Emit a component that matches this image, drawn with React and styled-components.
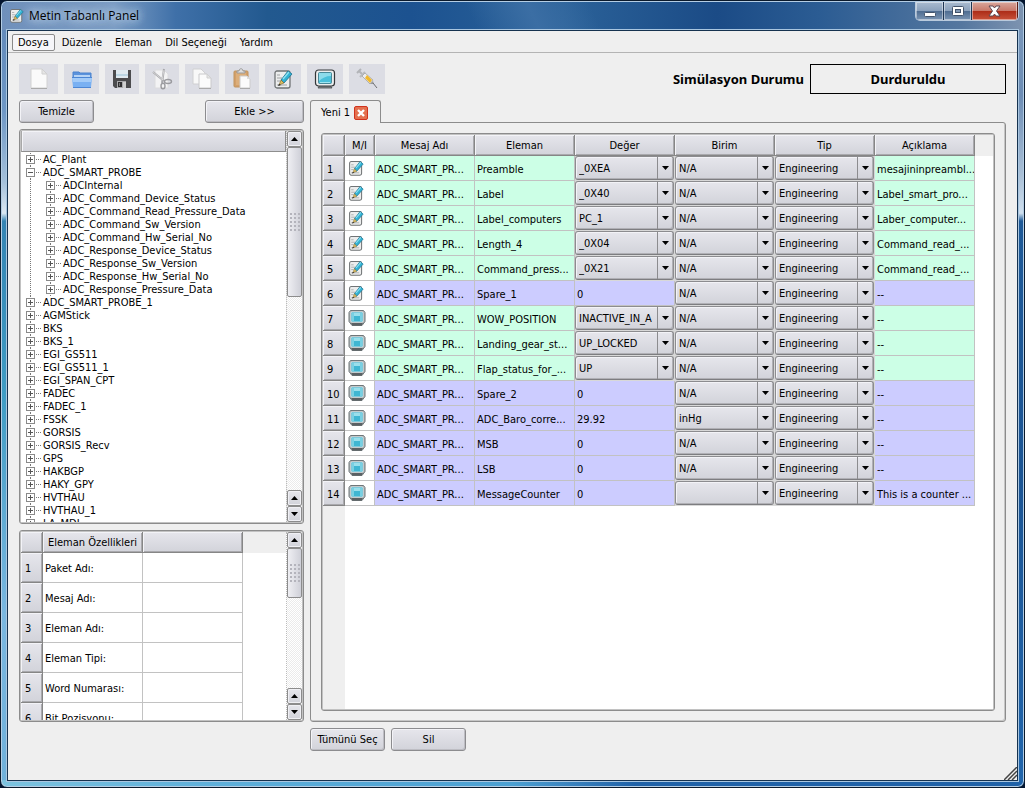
import React from 'react';
import styled, { createGlobalStyle, css } from 'styled-components';

const GlobalStyle = createGlobalStyle`
  * {
    box-sizing: border-box;
  }
  body {
    margin: 0;
    background: #03142f;
    color: #000;
    font-family: 'DejaVu Sans Condensed', 'Noto Sans', sans-serif;
    font-size: 11px;
    line-height: 13px;
  }
  button,
  select {
    font: inherit;
    color: inherit;
  }
`;

const face = css`
  background: linear-gradient(#e6e6ec, #d2d3da);
`;

const Window = styled.div`
  height: 100vh;
  min-height: 600px;
  display: flex;
  flex-direction: column;
  padding: 0 6px 6px;
  border: 1px solid #0b1a2c;
  border-radius: 7px;
  box-shadow: inset 0 0 0 1px #b4cde4;
  background:
    linear-gradient(90deg, transparent 50%, #1f62a8 62%) bottom / 100% 7px no-repeat,
    linear-gradient(90deg, #7cc3df, #5fb0da 20%, #4ba0d2 50%, #5a9fd2 66%, #2c72b8 80%) bottom / 100% 7px no-repeat,
    linear-gradient(#5e86b7, #6e97c5 14%, #a4c0da 23%, #dce8f2 27%, #3484b4 28%, #3f9cc4 50%, #7ab7e0 78%, #6fb0da) left / 8px 100% no-repeat,
    linear-gradient(#7f9bbd, #6d8db5 12%, #a9bfd6 22%, #cfdfee 27%, #1f5a98 28%, #1c5594 60%, #2266ac) right / 8px 100% no-repeat,
    #1d4f8c;
`;

const TitleBar = styled.header`
  flex: none;
  height: 28px;
  display: flex;
  align-items: flex-start;
  justify-content: space-between;
  margin: 1px -5px 0;
  padding: 0 0 0 7px;
  border-radius: 6px 6px 0 0;
  background:
    linear-gradient(65deg, transparent 46%, #3b6ea4 52%, transparent 58%),
    linear-gradient(90deg, #6f90bb, #7b9cc4 11%, #3f70a8 17%, #22598f 26%, #1c5290 40%, #2b6299 55%, #1b4b86 70%, #2b5c93 80%, #55779f 94%, #7d93b0);
`;

const Title = styled.h1`
  display: flex;
  align-items: center;
  gap: 5px;
  height: 26px;
  margin: 0;
  font-family: 'Open Sans', 'Noto Sans', sans-serif;
  font-size: 12px;
  font-weight: 400;
  span {
    text-shadow: 0 0 8px #c4d6ea, 0 0 8px #c4d6ea, 0 0 12px #a9c2de;
  }
`;

const Caption = styled.div`
  display: flex;
  margin-right: 4px;
  border: 1px solid #b9cadd;
  border-top: 0;
  border-radius: 0 0 5px 5px;
  overflow: hidden;
`;

const CaptionButton = styled.button`
  width: ${(props) => (props.$close ? '46px' : '28px')};
  height: 18px;
  display: flex;
  align-items: center;
  justify-content: center;
  padding: 0;
  border: 0;
  border-right: 1px solid ${(props) => (props.$close ? '#5a1a12' : '#1f3653')};
  box-shadow: inset 0 0 0 1px rgba(255, 255, 255, 0.45);
  background: ${(props) =>
    props.$close
      ? 'linear-gradient(#d9a79c, #c9796a 48%, #ad2d18 52%, #c8523a)'
      : 'linear-gradient(#a9bbd0, #8ba1bc 48%, #4f6d92 52%, #7b95b3)'};
`;

const Client = styled.div`
  flex: 1;
  min-height: 0;
  display: flex;
  flex-direction: column;
  position: relative;
  border: 1px solid #16324f;
  background: #efefef;
  box-shadow: 0 0 0 1px #a9c6e0;
`;

const MenuBar = styled.nav`
  flex: none;
  display: flex;
  gap: 1px;
  padding: 3px 4px 1px;
  border-bottom: 1px solid #b4b4b4;
`;

const MenuItem = styled.button`
  height: 17px;
  padding: 0 5px;
  line-height: 15px;
  background: ${(props) => (props.$active ? '#f6f6f9' : 'none')};
  border: 1px solid ${(props) => (props.$active ? '#8a8a8a' : 'transparent')};
  border-radius: 2px;
`;

const Content = styled.main`
  flex: 1;
  min-height: 0;
  display: grid;
  grid-template-columns: 285px minmax(0, 1fr);
  grid-template-rows: 30px minmax(0, 1fr) 23px;
  gap: 6px;
  padding: 11px 11px 29px;
`;

const ToolRow = styled.div`
  grid-column: 1 / -1;
  display: flex;
  justify-content: space-between;
`;

const Tools = styled.div`
  display: flex;
  gap: 6px;
`;

const ToolButton = styled.button`
  display: flex;
  align-items: center;
  justify-content: center;
  width: ${(props) => props.$width}px;
  padding: 0;
  border: 0;
  background: #dcdde4;
`;

const Status = styled.div`
  display: flex;
  align-items: center;
  gap: 6px;
  font-family: 'Noto Sans', sans-serif;
  font-size: 13px;
  font-weight: 700;
`;

const StatusValue = styled.output`
  width: 196px;
  height: 30px;
  line-height: 28px;
  border: 1px solid #000;
  text-align: center;
`;

const PushButton = styled.button`
  ${face}
  width: ${(props) => (props.$wide ? '99px' : '75px')};
  height: 23px;
  padding: 0;
  white-space: nowrap;
  border: 1px solid #8c8c8f;
  border-radius: 3px;
  box-shadow: inset 1px 1px 0 #f3f3f7, inset -1px -1px 0 #bdbdc3;
`;

const SidePane = styled.section`
  min-height: 0;
  display: flex;
  flex-direction: column;
  gap: 6px;
`;

const ButtonRow = styled.div`
  display: flex;
  justify-content: ${(props) => (props.$spread ? 'space-between' : 'flex-start')};
  gap: 6px;
`;

const Frame = styled.div`
  flex: ${(props) => (props.$height ? 'none' : '1')};
  height: ${(props) => (props.$height ? `${props.$height}px` : 'auto')};
  min-height: 0;
  display: flex;
  overflow: hidden;
  padding: 1px;
  border: 1px solid #8c8c8c;
  border-radius: 3px;
  box-shadow: inset 0 0 0 1px #c2c2c2;
  background: #fff;
`;

const FrameBody = styled.div`
  flex: 1;
  min-width: 0;
  overflow: hidden;
  background: ${(props) =>
    props.$gutter
      ? 'linear-gradient(#efefef, #efefef) top / 100% 21px no-repeat, linear-gradient(#efefef, #efefef) left / 22px 100% no-repeat, #fff'
      : '#fff'};
`;

const TreeHeader = styled.div`
  ${face}
  height: 21px;
  border: 1px solid #8e8e8e;
  border-top: 0;
  border-left-color: #a8a8a8;
  box-shadow: inset 1px 1px 0 #f3f3f7;
`;

const TreeList = styled.ul`
  margin: 0;
  padding: ${(props) => (props.$nested ? '0 0 0 20px' : '1px 0 0 4px')};
  list-style: none;
  ${(props) =>
    props.$nested &&
    css`
      background: repeating-linear-gradient(#777 0 1px, #fff 1px 2px) 5px 0 / 1px 100% no-repeat;
    `}
`;

const TreeRow = styled.div`
  display: flex;
  height: 13px;
  white-space: nowrap;
`;

const Expander = styled.button`
  display: flex;
  width: 18px;
  height: 13px;
  padding: 0;
  border: 0;
  background: none;
`;

const ScrollTrack = styled.div`
  flex: none;
  width: 16px;
  display: flex;
  flex-direction: column;
  border-left: 1px dotted #bbb;
  background: repeating-conic-gradient(#fff 0 25%, #ebebeb 0 50%) 0 0 / 2px 2px;
`;

const ScrollButton = styled.button`
  ${face}
  flex: none;
  height: 16px;
  display: flex;
  align-items: center;
  justify-content: center;
  padding: 0;
  border: 1px solid #8c8c8c;
  border-radius: 2px;
  box-shadow: inset 0 0 0 1px #f0f0f4;
`;

const ScrollThumb = styled.div`
  flex: none;
  height: ${(props) => props.$size}px;
  display: flex;
  align-items: center;
  justify-content: center;
  border: 1px solid #8c8c8c;
  border-radius: 2px;
  background: linear-gradient(90deg, #efeff3, #cfd0d8);
`;

const ScrollSpace = styled.div`
  flex: 1;
`;

const Grip = styled.div`
  width: 12px;
  height: 20px;
  background: radial-gradient(#b4b4bc 1px, transparent 1px) 0 0 / 4px 4px;
`;

const Grid = styled.table`
  table-layout: fixed;
  width: ${(props) => props.$width}px;
  border-collapse: separate;
  border-spacing: 0;
  th {
    ${face}
    font-weight: 400;
    border: solid #868686;
    border-width: 0 1px 1px 0;
    box-shadow: inset 1px 1px 0 #f3f3f7, inset -1px -1px 0 #a9a9ad;
  }
  thead th {
    height: 21px;
    padding: 0;
  }
  tbody th {
    height: ${(props) => props.$row}px;
    padding: 2px 0 0 4px;
    text-align: left;
  }
`;

const Cell = styled.td`
  padding: 2px 0 0 2px;
  border: solid #c2c2c2;
  border-width: 0 1px 1px 0;
  overflow: hidden;
  white-space: nowrap;
  background: ${(props) => props.$tint || '#fff'};
`;

const IconCell = styled(Cell)`
  padding: 0 0 0 3px;
  svg {
    display: block;
  }
`;

const ComboCell = styled(Cell)`
  padding: 0;
  border-color: #d8d8d8;
  background: #d8d8d8;
`;

const ComboBox = styled.div`
  display: grid;
  height: 24px;
  > * {
    grid-area: 1 / 1;
  }
  select {
    ${face}
    appearance: none;
    width: 100%;
    height: 24px;
    padding: 0 21px 0 3px;
    text-overflow: clip;
    border: 1px solid #8c8c8f;
    border-bottom-color: #7d7d80;
    border-radius: 3px;
    box-shadow: inset 1px 1px 0 #f3f3f7, inset -1px -1px 0 #b0b0b5;
  }
`;

const ComboArrow = styled.span`
  justify-self: end;
  display: flex;
  align-items: center;
  justify-content: center;
  width: 17px;
  margin: 1px 0;
  padding-right: 2px;
  border-left: 1px solid #8c8c8f;
  pointer-events: none;
`;

const TabPane = styled.section`
  min-height: 0;
  display: flex;
  flex-direction: column;
`;

const Tab = styled.div`
  align-self: flex-start;
  position: relative;
  display: flex;
  align-items: center;
  gap: 4px;
  height: 23px;
  padding: 1px 12px 0 10px;
  border: 1px solid #8c8c8c;
  border-bottom: 0;
  border-radius: 3px 3px 0 0;
  background: #efefef;
  margin-bottom: -1px;
`;

const CloseTab = styled.button`
  width: 14px;
  height: 14px;
  padding: 0;
  border: 0;
  background: none;
  svg {
    display: block;
  }
`;

const TabBody = styled.div`
  flex: 1;
  min-height: 0;
  display: flex;
  padding: 10px;
  border: 1px solid #8c8c8c;
  border-radius: 0 3px 3px 3px;
  box-shadow: inset -1px -1px 0 #c6c6c6;
`;

const SheetFrame = styled(Frame)`
  flex: 1;
`;

const Actions = styled(ButtonRow)`
  grid-column: 2;
`;

const SizeGrip = styled.svg`
  position: absolute;
  right: 0;
  bottom: 0;
`;

function NewIcon() {
  return (
    <svg width="20" height="22" viewBox="0 0 20 22">
      <path d="M2 1h11l5 5v14H2z" fill="#fafafa" stroke="#d2d2d2" />
      <path d="M13 1v5h5z" fill="#e6e6e6" stroke="#d0d0d0" />
      <path d="M2 20.5h16" stroke="#aaa" />
    </svg>
  );
}

function OpenIcon() {
  return (
    <svg width="22" height="20" viewBox="0 0 22 20">
      <path d="M2 3h6l1 1h11v6H2z" fill="#5c93dc" stroke="#4a83cf" />
      <path d="M3 6h16v4H3z" fill="#b7d4f5" />
      <path d="M1 9h20l-1 9H2z" fill="#79b0f2" />
      <path d="M1 9h20l-1 4H2z" fill="#a3cbf8" />
      <path d="M1 8.5h20M2 18.5h18" stroke="#4c86d4" />
    </svg>
  );
}

function SaveIcon() {
  return (
    <svg width="20" height="20" viewBox="0 0 20 20">
      <path d="M1 1h18v18H3l-2-2z" fill="#4c4c4e" />
      <path d="M4 1h12v8H4z" fill="#dfeaf0" />
      <path d="M4 5h12v2H4z" fill="#bcd6e3" />
      <path d="M5 12h9v7H5z" fill="#a9a9ab" />
      <path d="M6 13h4v5H6z" fill="#2f2f30" />
      <path d="M7 14h1v3H7z" fill="#777" />
      <path d="M11 13h3v6h-3z" fill="#cfcfcf" />
    </svg>
  );
}

function CutIcon() {
  return (
    <svg width="22" height="22" viewBox="0 0 22 22">
      <path d="M4 2h9l4 4v14H4z" fill="#f3f3f4" stroke="#dcdcde" />
      <path d="M2 4l11 9M13 1l-2 14" stroke="#a8a8ac" strokeWidth="2" fill="none" />
      <path d="M2 4l10 8M13 2l-2 10" stroke="#dedede" strokeWidth=".8" fill="none" />
      <ellipse cx="17" cy="13.5" rx="3.5" ry="2" fill="none" stroke="#9b9b9f" strokeWidth="1.4" />
      <ellipse cx="12" cy="18" rx="2" ry="2.800" fill="none" stroke="#9b9b9f" strokeWidth="1.4" />
    </svg>
  );
}

function CopyIcon() {
  return (
    <svg width="22" height="22" viewBox="0 0 22 22">
      <path d="M2 1h8l4 4v11H2z" fill="#f8f8f8" stroke="#d0d0d2" />
      <path d="M8 6h8l4 4v10H8z" fill="#fbfbfb" stroke="#cacacc" />
      <path d="M16 6v4h4z" fill="#e5e5e5" stroke="#d0d0d0" />
      <path d="M8 20.5h12" stroke="#aaa" />
    </svg>
  );
}

function PasteIcon() {
  return (
    <svg width="20" height="22" viewBox="0 0 20 22">
      <rect x="2" y="3" width="14" height="16" rx="1" fill="#d3a06a" stroke="#c1945e" />
      <path d="M4 5h10v12H4z" fill="#dcae7a" />
      <path d="M5 5V3h2c0-3 4-3 4 0h2v2z" fill="#ddd" stroke="#9a9a9a" />
      <path d="M8 8h7l3 3v9H8z" fill="#fbfbfb" stroke="#ccc" />
      <path d="M15 8v3h3z" fill="#ddd" />
      <path d="M8 20.5h10" stroke="#aaa" />
    </svg>
  );
}

function NoteIcon({ size }) {
  return (
    <svg width={size} height={size} viewBox="0 0 20 20">
      <rect x="2" y="2" width="15" height="17" rx="2" fill="#eceded" stroke="#707476" strokeWidth="1.3" />
      <path d="M4 6h3M4 9h5M4 12h3M4 16h10" stroke="#a0a3a5" />
      <path d="M8 11L15 2l4 3-8 9z" fill="#32b3d4" stroke="#16708f" strokeWidth=".8" />
      <path d="M10 10l6-7" stroke="#8fe2f2" strokeWidth="1.300" />
      <path d="M8 11l3 3-5 2z" fill="#dfbe5f" stroke="#73602a" strokeWidth=".6" />
      <path d="M5 17l1-2 2 1z" fill="#222" />
    </svg>
  );
}

function MonitorIcon() {
  return (
    <svg width="22" height="22" viewBox="0 0 22 22">
      <path d="M6 17h10l2 3H4z" fill="#85888a" stroke="#484b4d" strokeWidth=".8" />
      <rect x="1.5" y="2" width="19" height="16" rx="3" fill="#eceeee" stroke="#333638" strokeWidth="1.2" />
      <rect x="4.5" y="4.500" width="13" height="11" rx="1" fill="#4ac0da" stroke="#3f7f8e" strokeWidth=".9" />
      <path d="M5 5h12v3c-5 0-9 2-12 5z" fill="#8cdceb" />
      <path d="M6 14.500h10" stroke="#a0e6f0" />
    </svg>
  );
}

function ScreenIcon() {
  return (
    <svg width="18" height="18" viewBox="0 0 18 18">
      <path d="M2.500 1.500h13l1.500 2v9l-3 4H4l-3-4v-9z" fill="#b3b8ba" stroke="#6f7679" />
      <path d="M3 14h12l-1.500 2.500h-9z" fill="#5a6063" />
      <rect x="3" y="3" width="12" height="10" rx="1" fill="#3fb6d2" stroke="#dfe7e9" strokeWidth=".8" />
      <path d="M4 4h10v3H4z" fill="#9adfeb" />
      <path d="M4 4h2v8H4zM12 4h2v8h-2z" fill="#79d0e2" />
    </svg>
  );
}

function SyringeIcon() {
  return (
    <svg width="22" height="22" viewBox="0 0 22 22">
      <path d="M1 5l4-4M3 3l3 3" stroke="#b2b4b8" strokeWidth="2" />
      <path d="M4 9l5-5M6 6l2 2" stroke="#b8babd" strokeWidth="2" />
      <path d="M6 8l3-3 8 7-3 4z" fill="#ececee" stroke="#a2a3a6" strokeWidth=".8" />
      <path d="M9 10l2-3 5 5-2 3z" fill="#f1b92c" />
      <path d="M14 16l3-3 1 3z" fill="#98999c" />
      <path d="M17 15l4 5" stroke="#6d6e70" />
    </svg>
  );
}

function CloseIcon() {
  return (
    <svg width="14" height="14" viewBox="0 0 14 14">
      <rect x=".5" y=".5" width="13" height="13" rx="1.5" fill="#e4704e" stroke="#d0321c" />
      <path d="M4 4l6 6M10 4l-6 6" stroke="#fff" strokeWidth="2.4" />
    </svg>
  );
}

function Arrow({ up }) {
  return (
    <svg width="7" height="4" viewBox="0 0 7 4" aria-hidden="true">
      <path d={up ? 'M0 4h7L3.5 0z' : 'M0 0h7L3.5 4z'} fill="#000" />
    </svg>
  );
}

const tools = [
  { label: 'Yeni', width: 39, icon: <NewIcon /> },
  { label: 'Aç', width: 35, icon: <OpenIcon /> },
  { label: 'Kaydet', width: 34, icon: <SaveIcon /> },
  { label: 'Kes', width: 34, icon: <CutIcon /> },
  { label: 'Kopyala', width: 34, icon: <CopyIcon /> },
  { label: 'Yapıştır', width: 34, icon: <PasteIcon /> },
  { label: 'Mesaj', width: 36, icon: <NoteIcon size={20} /> },
  { label: 'İzle', width: 36, icon: <MonitorIcon /> },
  { label: 'Enjekte', width: 36, icon: <SyringeIcon /> },
];

const menus = ['Dosya', 'Düzenle', 'Eleman', 'Dil Seçeneği', 'Yardım'];

const tree = [
  { name: 'AC_Plant' },
  {
    name: 'ADC_SMART_PROBE',
    items: [
      { name: 'ADCInternal' },
      { name: 'ADC_Command_Device_Status' },
      { name: 'ADC_Command_Read_Pressure_Data' },
      { name: 'ADC_Command_Sw_Version' },
      { name: 'ADC_Command_Hw_Serial_No' },
      { name: 'ADC_Response_Device_Status' },
      { name: 'ADC_Response_Sw_Version' },
      { name: 'ADC_Response_Hw_Serial_No' },
      { name: 'ADC_Response_Pressure_Data' },
    ],
  },
  { name: 'ADC_SMART_PROBE_1' },
  { name: 'AGMStick' },
  { name: 'BKS' },
  { name: 'BKS_1' },
  { name: 'EGI_GS511' },
  { name: 'EGI_GS511_1' },
  { name: 'EGI_SPAN_CPT' },
  { name: 'FADEC' },
  { name: 'FADEC_1' },
  { name: 'FSSK' },
  { name: 'GORSIS' },
  { name: 'GORSIS_Recv' },
  { name: 'GPS' },
  { name: 'HAKBGP' },
  { name: 'HAKY_GPY' },
  { name: 'HVTHAU' },
  { name: 'HVTHAU_1' },
  { name: 'LA_MDI' },
];

const properties = ['Paket Adı:', 'Mesaj Adı:', 'Eleman Adı:', 'Eleman Tipi:', 'Word Numarası:', 'Bit Pozisyonu:'];

const columns = ['M/I', 'Mesaj Adı', 'Eleman', 'Değer', 'Birim', 'Tip', 'Açıklama'];

const rows = [
  { element: 'Preamble', value: '_0XEA', choice: true, note: 'mesajininpreambl...' },
  { element: 'Label', value: '_0X40', choice: true, note: 'Label_smart_pro...' },
  { element: 'Label_computers', value: 'PC_1', choice: true, note: 'Laber_computer...' },
  { element: 'Length_4', value: '_0X04', choice: true, note: 'Command_read_...' },
  { element: 'Command_press...', value: '_0X21', choice: true, note: 'Command_read_...' },
  { element: 'Spare_1', value: '0', note: '--' },
  { element: 'WOW_POSITION', value: 'INACTIVE_IN_AIR', choice: true, monitor: true, note: '--' },
  { element: 'Landing_gear_st...', value: 'UP_LOCKED', choice: true, monitor: true, note: '--' },
  { element: 'Flap_status_for_...', value: 'UP', choice: true, monitor: true, note: '--' },
  { element: 'Spare_2', value: '0', monitor: true, note: '--' },
  { element: 'ADC_Baro_corre...', value: '29.92', unit: 'inHg', monitor: true, note: '--' },
  { element: 'MSB', value: '0', monitor: true, note: '--' },
  { element: 'LSB', value: '0', monitor: true, note: '--' },
  { element: 'MessageCounter', value: '0', unit: '', monitor: true, note: 'This is a counter ...' },
];

function Combo({ label, value, options }) {
  return (
    <ComboBox>
      <select aria-label={label} defaultValue={value}>
        {options.map((option) => (
          <option key={option}>{option}</option>
        ))}
      </select>
      <ComboArrow>
        <Arrow />
      </ComboArrow>
    </ComboBox>
  );
}

function ScrollBar({ size }) {
  return (
    <ScrollTrack>
      <ScrollButton aria-label="Yukarı">
        <Arrow up />
      </ScrollButton>
      <ScrollThumb $size={size}>
        <Grip />
      </ScrollThumb>
      <ScrollSpace />
      <ScrollButton aria-label="Yukarı">
        <Arrow up />
      </ScrollButton>
      <ScrollButton aria-label="Aşağı">
        <Arrow />
      </ScrollButton>
    </ScrollTrack>
  );
}

function TreeNode({ node }) {
  const open = Boolean(node.items);
  return (
    <li>
      <TreeRow>
        <Expander aria-label={node.name} aria-expanded={open}>
          <svg width="17" height="13" viewBox="0 0 17 13" shapeRendering="crispEdges">
            <path d="M5.5 0v13M9 6.5h7" stroke="#777" strokeDasharray="1 1" />
            <rect x="1.5" y="2.5" width="8" height="8" fill="#fff" stroke="#8a8a8a" />
            <path d={open ? 'M3 6.5h5' : 'M3 6.5h5M5.5 4v5'} stroke="#555" />
          </svg>
        </Expander>
        {node.name}
      </TreeRow>
      {open && (
        <TreeList $nested>
          {node.items.map((child) => (
            <TreeNode key={child.name} node={child} />
          ))}
        </TreeList>
      )}
    </li>
  );
}

function PropertyTable() {
  return (
    <Grid $width={222} $row={30}>
      <colgroup>
        <col style={{ width: 22 }} />
        <col />
        <col />
      </colgroup>
      <thead>
        <tr>
          <th />
          <th>Eleman Özellikleri</th>
          <th />
        </tr>
      </thead>
      <tbody>
        {properties.map((name, index) => (
          <tr key={name}>
            <th>{index + 1}</th>
            <Cell>{name}</Cell>
            <Cell />
          </tr>
        ))}
      </tbody>
    </Grid>
  );
}

function MessageRow({ row, number }) {
  const tint = row.choice ? '#ccffe6' : '#ccccff';
  const noteTint = row.choice ? '#ccffe6' : '#ccccff';
  const unit = row.unit === undefined ? 'N/A' : row.unit;
  return (
    <tr>
      <th>{number}</th>
      <IconCell>{row.monitor ? <ScreenIcon /> : <NoteIcon size={16} />}</IconCell>
      <Cell $tint={tint}>ADC_SMART_PR...</Cell>
      <Cell $tint={tint}>{row.element}</Cell>
      {row.choice ? (
        <ComboCell>
          <Combo label="Değer" value={row.value} options={[row.value]} />
        </ComboCell>
      ) : (
        <Cell $tint={tint}>{row.value}</Cell>
      )}
      <ComboCell>
        <Combo label="Birim" value={unit} options={['', 'N/A', 'inHg']} />
      </ComboCell>
      <ComboCell>
        <Combo label="Tip" value="Engineering" options={['Engineering']} />
      </ComboCell>
      <Cell $tint={noteTint}>{row.note}</Cell>
    </tr>
  );
}

function App() {
  return (
    <>
      <GlobalStyle />
      <Window>
        <TitleBar>
          <Title>
            <NoteIcon size={15} />
            <span>Metin Tabanlı Panel</span>
          </Title>
          <Caption>
            <CaptionButton aria-label="Simge durumuna küçült">
              <svg width="12" height="12" viewBox="0 0 12 12">
                <rect x=".5" y="7.5" width="11" height="4" rx="1" fill="#fff" stroke="#42536b" />
              </svg>
            </CaptionButton>
            <CaptionButton aria-label="Ekranı kapla">
              <svg width="12" height="11" viewBox="0 0 12 11">
                <rect x=".5" y=".5" width="11" height="9" rx="1" fill="#fff" stroke="#42536b" />
                <rect x="3.5" y="3.5" width="5" height="3" fill="#8399b4" stroke="#42536b" />
              </svg>
            </CaptionButton>
            <CaptionButton $close aria-label="Kapat">
              <svg width="13" height="12" viewBox="0 0 13 12">
                <path d="M1 1h4l1.5 2L8 1h4L8.500 6l3.500 5H8L6.500 9 5 11H1l3.500-5z" fill="#fff" stroke="#5b4650" />
              </svg>
            </CaptionButton>
          </Caption>
        </TitleBar>
        <Client>
          <MenuBar>
            {menus.map((name, index) => (
              <MenuItem key={name} $active={index === 0}>
                {name}
              </MenuItem>
            ))}
          </MenuBar>
          <Content>
            <ToolRow>
              <Tools>
                {tools.map((tool) => (
                  <ToolButton key={tool.label} $width={tool.width} aria-label={tool.label}>
                    {tool.icon}
                  </ToolButton>
                ))}
              </Tools>
              <Status>
                <label htmlFor="status">Simülasyon Durumu</label>
                <StatusValue id="status">Durduruldu</StatusValue>
              </Status>
            </ToolRow>

            <SidePane>
              <ButtonRow $spread>
                <PushButton>Temizle</PushButton>
                <PushButton $wide>Ekle &gt;&gt;</PushButton>
              </ButtonRow>
              <Frame>
                <FrameBody>
                  <TreeHeader />
                  <TreeList>
                    {tree.map((node) => (
                      <TreeNode key={node.name} node={node} />
                    ))}
                  </TreeList>
                </FrameBody>
                <ScrollBar size={150} />
              </Frame>
              <Frame $height={192}>
                <FrameBody $gutter>
                  <PropertyTable />
                </FrameBody>
                <ScrollBar size={50} />
              </Frame>
            </SidePane>

            <TabPane>
              <Tab>
                Yeni 1
                <CloseTab aria-label="Sekmeyi kapat">
                  <CloseIcon />
                </CloseTab>
              </Tab>
              <TabBody>
                <SheetFrame>
                  <FrameBody $gutter>
                    <Grid $width={652} $row={25}>
                      <colgroup>
                        <col style={{ width: 22 }} />
                        <col style={{ width: 30 }} />
                        <col span="6" />
                      </colgroup>
                      <thead>
                        <tr>
                          <th />
                          {columns.map((name) => (
                            <th key={name}>{name}</th>
                          ))}
                        </tr>
                      </thead>
                      <tbody>
                        {rows.map((row, index) => (
                          <MessageRow key={row.element} row={row} number={index + 1} />
                        ))}
                      </tbody>
                    </Grid>
                  </FrameBody>
                </SheetFrame>
              </TabBody>
            </TabPane>

            <Actions>
              <PushButton>Tümünü Seç</PushButton>
              <PushButton>Sil</PushButton>
            </Actions>
          </Content>
          <SizeGrip width="13" height="13" viewBox="0 0 13 13">
            <path d="M0 13L13 0M4 13l9-9M8 13l5-5" stroke="#444" strokeWidth="1.5" />
          </SizeGrip>
        </Client>
      </Window>
    </>
  );
}

export default App;
